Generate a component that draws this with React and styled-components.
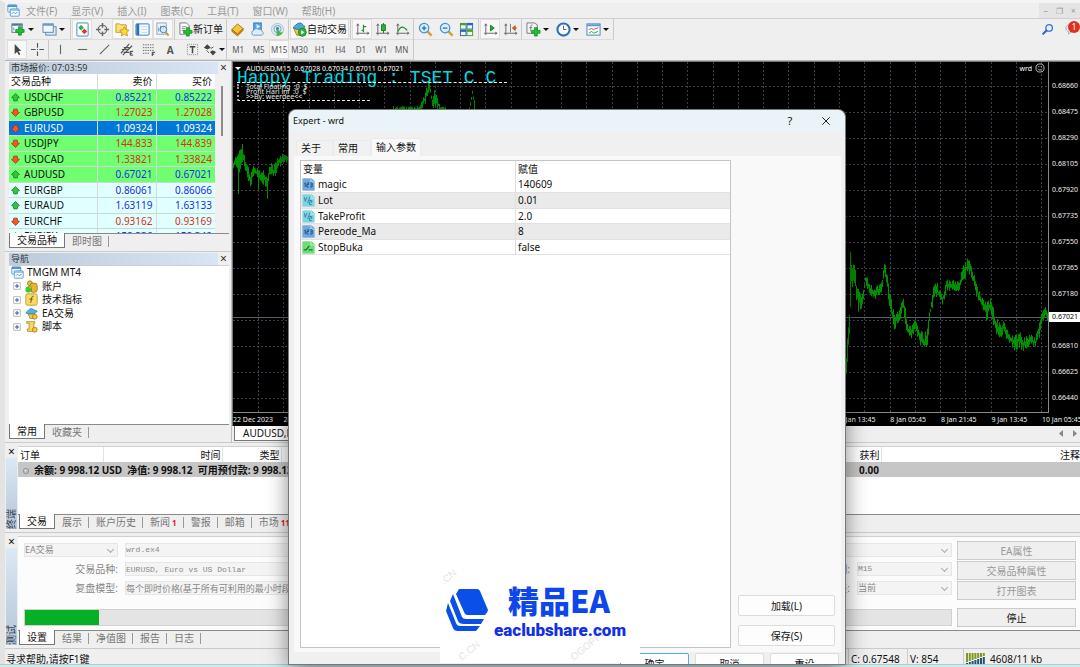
import React from "react";
import styled, { createGlobalStyle, css } from "styled-components";

const ui = `"Noto Sans", "Noto Sans CJK SC", sans-serif`;
const mono = `"Liberation Mono", "Noto Sans CJK SC", monospace`;

const GlobalStyle = createGlobalStyle`
  * { box-sizing: border-box; }
  body { margin: 0; background: #efefef; font: 10px/14px ${ui}; color: #111; }
  button, input, select { font: inherit; color: inherit; margin: 0; }
  table { border-collapse: collapse; table-layout: fixed; }
  td, th { padding: 0; font-weight: 400; overflow: hidden; white-space: nowrap; }
`;

/* ---------- frame ---------- */
const Screen = styled.div`
  position: relative;
  display: flex;
  flex-direction: column;
  min-height: 100vh;
  overflow: hidden;
  background: #efefef;
`;
const Frame = styled.div`
  flex: 1;
  display: flex;
  flex-direction: column;
  border-left: 5px solid #e3e3e3;
  border-top: 3px solid #f4f4f4;
`;
const DesktopEdge = styled.div`
  height: 3px;
  background: #cdeef0;
  border-top: 1px solid #b5cccd;
`;

/* ---------- menu and toolbars ---------- */
const MenuBar = styled.nav`
  display: flex;
  align-items: center;
  height: 16px;
  padding-left: 2px;
  border-bottom: 1px solid #cfcfcf;
  color: #999;
`;
const MenuItems = styled.div`
  display: flex;
  gap: 14px;
  flex: 1;
  padding-left: 6px;
`;
const MenuItem = styled.button`
  border: 0;
  padding: 0;
  background: none;
`;
const WindowControls = styled.div`
  display: flex;
  width: 41px;
  height: 15px;
  background: #e4e4e4;
`;
const WindowControl = styled.button`
  flex: 1;
  border: 0;
  padding: 0;
  background: none;
  color: #8a97a5;
  font-size: 8px;
  line-height: 14px;
`;
const ToolRow = styled.div`
  display: flex;
  height: ${(p) => p.$h}px;
  padding-left: 1px;
`;
const ToolGroup = styled.div`
  display: flex;
  width: ${(p) => p.$w}px;
  padding: 0 1px;
  border-right: 1px solid #c9c9c9;
  border-bottom: 1px solid #dcdcdc;
`;
const ToolButton = styled.button`
  flex: 1;
  min-width: 0;
  display: flex;
  align-items: center;
  justify-content: center;
  padding: 0;
  border: 0;
  background: ${(p) => (p.$on ? "#f8f8f8" : "none")};
  box-shadow: ${(p) => (p.$on ? "inset 0 0 0 1px #dedede" : "none")};
  color: ${(p) => p.$ink || "#111"};
  font-size: ${(p) => p.$size || 10}px;
  white-space: nowrap;
`;
const Caret = styled.span`
  margin-left: 2px;
  border: 3px solid transparent;
  border-top-color: #111;
  border-bottom: 0;
`;
const RightTools = styled.div`
  display: flex;
  align-items: center;
  gap: 10px;
  margin-left: auto;
`;
const Alert = styled.button`
  position: relative;
  width: 16px;
  height: 18px;
  padding: 0;
  border: 0;
  background: none;
`;
const Badge = styled.span`
  position: absolute;
  top: 0;
  right: 0;
  width: 12px;
  height: 12px;
  border-radius: 6px;
  background: #e03020;
  color: #fff;
  font-size: 9px;
  line-height: 12px;
`;

/* ---------- docked panels ---------- */
const Work = styled.main`
  flex: 1;
  display: flex;
  min-height: 383px;
  border-top: 1px solid #b5b5b5;
`;
const Side = styled.aside`
  display: flex;
  flex-direction: column;
  width: 227px;
  border-right: 1px solid #bdbdbd;
`;
const Panel = styled.section`
  display: flex;
  flex-direction: column;
  flex: ${(p) => (p.$grow ? "1" : "0 0 190px")};
  padding: 1px 2px 3px 4px;
  border-bottom: 1px solid #cacaca;
`;
const PanelHead = styled.header`
  display: flex;
  align-items: center;
  height: 12px;
  color: #333;
`;
const PanelTitle = styled.h2`
  flex: 1;
  margin: 0;
  padding-left: 2px;
  background: linear-gradient(90deg, #bccbda, #d7e5f4);
  font: 9px/12px ${ui};
`;
const CloseButton = styled.button`
  width: 11px;
  height: 12px;
  padding: 0;
  border: 0;
  background: none;
  font-size: 12px;
  line-height: 10px;
`;
const ListArea = styled.div`
  position: relative;
  flex: 1;
  min-height: 0;
  overflow: hidden;
  background: #fff;
  border-top: 1px solid #d0d0d0;
`;
const QuoteFrame = styled.div`
  display: flex;
  height: 159px;
  overflow: hidden;
  background: #fff;
`;
const QuoteTable = styled.table`
  flex: 1;
  th, td { height: 15px; line-height: 14px; border-bottom: 1px solid #c9d9d0; }
  tr:nth-child(even) td { height: 16px; }
  th, td + td { text-align: right; padding-right: 3px; }
  td + td, th + th { border-left: 1px solid #d5dcd8; }
  th:first-child { text-align: left; padding-left: 2px; }
  td:first-child { padding-left: 2px; }
  svg { vertical-align: -1px; margin-right: 4px; }
`;
const QuoteRow = styled.tr`
  background: ${(p) => p.$bg};
  color: ${(p) => (p.$sel ? "#fff" : "#111")};
  td + td { color: ${(p) => (p.$sel ? "#fff" : p.$ink)}; }
`;
const ScrollTrack = styled.div`
  width: 14px;
  padding: 12px 6px 0;
  background: #f0f0f0;
`;
const ScrollThumb = styled.div`
  height: 50px;
  background: #8a8a8a;
`;
const TabRow = styled.div`
  display: flex;
  height: 15px;
  border-top: 1px solid #8a8a8a;
  padding-left: ${(p) => p.$pad || 0}px;
`;
const Tab = styled.button`
  position: relative;
  padding: 0 7px;
  border: 0;
  background: none;
  color: #777;
  line-height: 13px;
  white-space: nowrap;
  &::after {
    content: "";
    position: absolute;
    right: 0;
    top: 2px;
    height: 11px;
    border-right: 1px solid #999;
  }
  ${(p) =>
    p.$on &&
    css`
      margin-top: -1px;
      background: #fff;
      color: #111;
      border: 1px solid #777;
      border-top: 0;
      &::after { display: none; }
    `}
`;
const Count = styled.b`
  color: #e0202c;
  font-size: 8px;
`;
const Tree = styled.ul`
  list-style: none;
  margin: 0;
  padding: 0 0 0 2px;
`;
const TreeItem = styled.li`
  display: flex;
  align-items: center;
  gap: ${(p) => (p.$root ? 3 : 4)}px;
  height: 13px;
  line-height: 13px;
  padding-left: ${(p) => (p.$root ? 0 : 2)}px;
  &:nth-child(even) { height: 14px; }
`;

/* ---------- chart ---------- */
const ChartColumn = styled.section`
  flex: 1;
  min-width: 0;
  display: flex;
  flex-direction: column;
`;
const ChartWindow = styled.div`
  position: relative;
  flex: 1;
  display: grid;
  grid-template: minmax(0, 1fr) 13px / minmax(0, 1fr) 31px;
  background: #000;
  border: solid #777;
  border-width: 1px 0 0 1px;
  color: #eee;
  font-size: 7px;
  line-height: 13px;
`;
const Plot = styled.div`
  position: relative;
  border: solid #8a8a8a;
  border-width: 0 1px 1px 0;
  svg { display: block; width: 100%; height: 350px; }
`;
const ChartCaption = styled.div`
  position: absolute;
  top: 0;
  left: 2px;
  right: 3px;
  height: 12px;
  display: flex;
  align-items: center;
  gap: 5px;
  color: #fff;
  ${Caret} { border-top-color: #fff; margin: 0; }
`;
const Expert = styled.span`
  display: flex;
  align-items: center;
  gap: 3px;
  margin-left: auto;
  && svg { width: 10px; height: 10px; }
`;
const Banner = styled.div`
  position: absolute;
  top: 7px;
  left: 4px;
  color: #00d8e0;
  font: 18px/18px ${mono};
  white-space: pre;
`;
const Comment = styled.div`
  position: absolute;
  top: 20px;
  left: 4px;
  width: ${(p) => p.$w}px;
  border-top: 1px dashed #eee;
`;
const CommentText = styled.div`
  position: absolute;
  top: 22px;
  left: 4px;
  padding-left: 7px;
  color: #eee;
  font: 7px/5px ${ui};
  white-space: pre;
  border-left: 2px dotted #999;
  border-bottom: 1px dashed #eee;
  width: 133px;
  height: 17px;
`;
const PriceAxis = styled.div`
  position: relative;
  padding-top: 11px;
`;
const PriceTick = styled.div`
  height: 26px;
  padding-left: 3px;
  line-height: 26px;
`;
const LastPrice = styled.div`
  position: absolute;
  top: 250px;
  left: 0;
  right: 0;
  height: 10px;
  padding-left: 3px;
  background: #fff;
  color: #000;
  line-height: 10px;
`;
const TimeAxis = styled.div`
  grid-column: 1 / -1;
  display: grid;
  grid-template-columns: repeat(16, minmax(0, 1fr)) 38px;
  white-space: nowrap;
`;
const ChartTabs = styled.div`
  display: flex;
  align-items: flex-start;
  height: 17px;
  padding-left: 2px;
  border-bottom: 1px solid #cacaca;
`;
const ChartTab = styled(Tab)`
  height: 15px;
  padding: 0 8px;
  margin: 0;
`;
const Scrollers = styled.div`
  margin-left: auto;
  display: flex;
  gap: 9px;
  padding: 4px 2px 0 0;
`;

/* ---------- terminal and tester ---------- */
const Dock = styled.section`
  display: flex;
  height: ${(p) => p.$h}px;
  padding: 3px 0 3px 1px;
  border-bottom: 1px solid #cacaca;
`;
const Spine = styled.div`
  width: 12px;
  display: flex;
  flex-direction: column;
`;
const SpineLabel = styled.div`
  flex: 1;
  width: 11px;
  background: linear-gradient(#b5c6d8, #dbe8f5);
  color: #33414f;
  font-size: 10px;
  line-height: 11px;
  writing-mode: vertical-rl;
  text-orientation: sideways;
  transform: rotate(180deg);
`;
const DockBody = styled.div`
  flex: 1;
  min-width: 0;
  display: flex;
  flex-direction: column;
`;
const OrdersTable = styled.table`
  width: 100%;
  th { height: 15px; text-align: right; padding-right: 1px; border-right: 1px solid #e2e2e2; }
  th:first-child { text-align: left; padding-left: 2px; }
  th:last-child { padding: 0; border: 0; }
  td { height: 15px; background: #c6c6c6; font-weight: 700; text-align: right; padding-right: 2px; }
  td:first-child { text-align: left; padding-left: 4px; white-space: pre; }
  svg { margin-right: 4px; vertical-align: -1px; }
`;
const TesterForm = styled.form`
  flex: 1;
  display: grid;
  grid-template-columns: minmax(0, 1fr) 119px;
  gap: 5px;
  padding: 4px 4px 0 6px;
  background: #fcfcfc;
  border-top: 1px solid #d0d0d0;
  color: #888;
`;
const Fields = styled.div`
  display: grid;
  grid-template-columns: 94px minmax(0, 1fr) 60px 95px;
  grid-template-rows: 14px 14px 14px 17px;
  row-gap: 5px;
  column-gap: 7px;
  align-content: start;
  padding-top: 2px;
`;
const FieldLabel = styled.label`
  text-align: right;
`;
const fieldBox = css`
  display: block;
  width: 100%;
  height: 14px;
  padding: 0;
  border: 1px solid #e6e6e6;
  background: #f4f4f4;
  color: #888;
  font-family: ${(p) => (p.$latin ? mono : ui)};
  font-size: ${(p) => (p.$latin ? 8 : 9)}px;
  line-height: 12px;
  opacity: 1;
`;
const TextField = styled.input`
  ${fieldBox}
`;
const SelectWrap = styled.div`
  position: relative;
  grid-column: ${(p) => (p.$wide ? "2 / -1" : "auto")};
  &::after {
    content: "";
    position: absolute;
    right: 5px;
    top: 4px;
    width: 4px;
    height: 4px;
    border: solid #aaa;
    border-width: 0 1px 1px 0;
    transform: rotate(45deg);
  }
`;
const Select = styled.select`
  ${fieldBox}
  appearance: none;
`;
const Progress = styled.div`
  grid-column: 1 / -1;
  margin-top: 9px;
  height: 17px;
  border: 1px solid #d2d2d2;
  background: #e4e4e4;
`;
const ProgressFill = styled.div`
  width: 8%;
  height: 15px;
  background: #06b025;
`;
const TesterButtons = styled.div`
  display: flex;
  flex-direction: column;
  gap: 1px;
`;
const TesterButton = styled.button`
  height: 19px;
  padding: 0;
  border: 1px solid #cbcbcb;
  background: #efefef;
  font-size: 10px;
  color: ${(p) => (p.disabled ? "#999" : "#111")};
  margin-top: ${(p) => (p.$apart ? 7 : 0)}px;
`;
const StatusBar = styled.footer`
  display: flex;
  height: 15px;
  overflow: hidden;
  line-height: 20px;
  padding-left: 1px;
`;
const StatusCell = styled.span`
  width: ${(p) => (p.$w ? `${p.$w}px` : "auto")};
  height: 20px;
  flex: ${(p) => (p.$w ? "none" : "1")};
  display: flex;
  align-items: center;
  gap: 5px;
  padding-left: ${(p) => (p.$w ? 2 : 0)}px;
  border-left: ${(p) => (p.$w ? "1px solid #ccc" : "0")};
  white-space: nowrap;
`;

/* ---------- dialog ---------- */
const Dialog = styled.div`
  position: absolute;
  top: 110px;
  left: 289px;
  right: 235px;
  bottom: 3px;
  display: flex;
  flex-direction: column;
  overflow: hidden;
  border-radius: 7px 7px 0 0;
  background: #f0f0f0;
`;
const DialogShadow = styled.div`
  position: absolute;
  top: 110px;
  left: 289px;
  right: 235px;
  bottom: 3px;
  border-radius: 7px 7px 0 0;
  box-shadow: 0 0 0 1px #777, 0 6px 22px rgba(0, 0, 0, 0.5);
`;
const DialogTitle = styled.header`
  display: flex;
  align-items: center;
  height: 22px;
  padding: 0 5px 0 4px;
  background: #eaf4f8;
  font-size: 9px;
  h1 { flex: 1; margin: 0; font: inherit; }
`;
const TitleButton = styled.button`
  width: 28px;
  margin-left: 8px;
  padding: 0;
  border: 0;
  background: none;
  font-size: 11px;
  line-height: 20px;
  svg { vertical-align: -1px; }
`;
const DialogTabs = styled.div`
  display: flex;
  align-items: flex-end;
  height: 24px;
  padding: 0 7px;
`;
const DialogTab = styled.button`
  height: ${(p) => (p.$on ? 18 : 16)}px;
  width: ${(p) => p.$w}px;
  padding: 0 4px 1px;
  border: 1px solid #ebebeb;
  border-bottom: 0;
  background: ${(p) => (p.$on ? "#f9f9f9" : "#f1f1f1")};
  text-align: left;
  white-space: nowrap;
`;
const DialogPage = styled.div`
  flex: 1;
  display: flex;
  gap: 7px;
  margin: 0 4px 0 5px;
  padding: 4px 6px;
  background: #f9f9f9;
`;
const ParamBox = styled.div`
  flex: 1;
  background: #fff;
  border: 1px solid #c4c4c4;
`;
const ParamTable = styled.table`
  width: 100%;
  th, td { height: 15px; text-align: left; padding-left: 2px; line-height: 14px; }
  td + td, th + th { border-left: 1px solid #dedede; }
  td { border-bottom: 1px solid #e2e2e2; }
  td:first-child { padding-left: 1px; }
  th { height: 16px; }
  tbody tr:nth-child(even) td { height: 16px; background: #eaeaea; }
  svg { vertical-align: -3px; margin-right: 3px; }
`;
const SideActions = styled.div`
  display: flex;
  flex-direction: column;
  justify-content: flex-end;
  gap: 9px;
  width: 97px;
  padding-bottom: 2px;
`;
const PushButton = styled.button`
  height: 21px;
  width: ${(p) => p.$w || 97}px;
  flex: none;
  padding: 0;
  border: 1px solid ${(p) => (p.$primary ? "#5aa9e0" : "#dcdcdc")};
  border-radius: 2px;
  background: #fdfdfd;
  font-size: 10px;
`;
const DialogFooter = styled.footer`
  display: flex;
  justify-content: flex-end;
  gap: 6px;
  height: 12px;
  overflow: hidden;
  padding: 1px 6px 0;
`;
const SiteMark = styled.div`
  position: absolute;
  left: 151px;
  bottom: 1px;
  width: 200px;
  height: 102px;
  background: #fff;
  svg { display: block; }
`;

/* ---------- icons ---------- */
const Svg = ({ s = 16, children }) => (
  <svg width={s} height={s} viewBox="0 0 16 16" fill="none" aria-hidden="true">{children}</svg>
);
const plus = (x, y) => (
  <path d={`M${x + 3} ${y}h3v3h3v3h-3v3h-3v-3h-3v-3h3z`} fill="#19c52b" stroke="#07801a" strokeWidth=".7" />
);
const gridMark = "M3 14V2M1 12h14M3 2L1.8 4M3 2l1.2 2M15 12l-2-1.2M15 12l-2 1.2";
const icons = {
  windows: <><rect x="1" y="1" width="11" height="9" rx="1" fill="#e9f5ff" stroke="#4b90cf" /><path d="M1 2.5h11" stroke="#3b82c5" strokeWidth="2" /><rect x="4" y="6" width="11" height="9" rx="1" fill="#f3faff" stroke="#4b90cf" /><path d="M4 7.5h11M6 12l2-2 2 2 3-2" stroke="#4b90cf" /></>,
  newChart: <><rect x="1" y="2" width="11" height="9" fill="#f4f9ff" stroke="#54779b" /><path d="M1 3h11" stroke="#54779b" strokeWidth="2" /><path d="M3 9V6" stroke="#789" />{plus(5, 5)}</>,
  profiles: <><rect x="4" y="5" width="11" height="9" fill="#dceaf8" stroke="#5b86ac" /><rect x="1" y="2" width="11" height="9" fill="#eef6ff" stroke="#5b86ac" /><path d="M1 3h11" stroke="#6b9bc8" strokeWidth="2" /></>,
  market: <><rect x="2" y="1" width="12" height="14" rx="1" fill="#fff" stroke="#3b86c9" /><path d="M6.500 3l3 3-3 3-3-3z" fill="#2bb23d" /><path d="M10 7l3 3-3 3-3-3z" fill="#e23a22" /></>,
  target: <><circle cx="8" cy="8" r="4.5" stroke="#666" strokeWidth="1.2" /><path d="M8 1v5M8 10v5M1 8h5M10 8h5" stroke="#666" strokeWidth="1.6" /></>,
  navigator: <><path d="M1 2h4l1 1h6v8H1z" fill="#ffe07a" stroke="#c29a20" /><path d="M10 5l1.6 3.2 3.4.5-2.4 2.5.6 3.6-3.2-1.7-3.2 1.7.6-3.6L5 8.700l3.400-.5z" fill="#ffd83a" stroke="#b88a12" strokeWidth=".8" /></>,
  terminal: <><rect x="1" y="2" width="14" height="12" rx="1" fill="#f3faff" stroke="#2e7bc4" /><path d="M3 2v12" stroke="#2e6fb5" strokeWidth="3" /><path d="M7 5h6M7 8h6M7 11h6" stroke="#c3d6e8" /></>,
  tester: <><rect x="2" y="1" width="10" height="12" fill="#eef4fa" stroke="#8aa5be" /><path d="M4 10V6M6 9V4M9 8V4" stroke="#4a86bd" /><circle cx="9" cy="8" r="3.500" fill="#cfe8f9" fillOpacity=".8" stroke="#4a7da8" /><path d="M11.500 11l3 3.500" stroke="#c59a35" strokeWidth="2" /></>,
  order: <><path d="M2 1h7l3 3v9H2z" fill="#fff" stroke="#777" /><path d="M4 5h5M4 7h4M4 9h3" stroke="#888" />{plus(6, 6)}</>,
  book: <><path d="M2 8l6-6 6 5-6 6z" fill="#f6c43b" stroke="#a8740d" /><path d="M2 8v2l6 5 6-6V7L8 13z" fill="#d18d1b" stroke="#99660b" strokeWidth=".7" /></>,
  cloud: <><rect x="4" y="1" width="8" height="8" fill="#58a9e8" stroke="#2d76b8" /><path d="M7 2v5l4-2z" fill="#d9f0ff" /><path d="M3.500 14a2.600 2.600 0 01.5-5 3 3 0 015-1 3 3 0 014 2.200 2 2 0 01-.5 3.800z" fill="#e0eefb" stroke="#6594c6" /></>,
  signal: <><circle cx="8" cy="8" r="6.500" fill="#dce9ee" stroke="#a9c6ce" /><circle cx="8" cy="7.500" r="3.800" stroke="#6fa6c2" /><path d="M7 8v7c3 0 6-2 7-5-2 2-4 1-4-1z" fill="#49b34e" /><circle cx="8" cy="7" r="1.600" fill="#3d7d9e" /></>,
  expert: <><path d="M2 7h12l-2 7H5z" fill="#f4c647" stroke="#a8801d" /><path d="M1 6c3-2 3-4 7-5 3 0 4 3 6 4-3 3-9 4-13 1z" fill="#4ba8dc" stroke="#2473a5" /><circle cx="11" cy="11" r="4.200" fill="#2fb739" stroke="#138520" /><path d="M9.800 8.800v4.400l3.500-2.200z" fill="#fff" /></>,
  bars: <><path d={gridMark} stroke="#666" /><path d="M9 3v8M9 5h3M7 9h2" stroke="#278a2b" strokeWidth="1.300" /></>,
  candles: <><path d={gridMark} stroke="#666" /><path d="M9 1v11" stroke="#167c1c" /><rect x="7" y="3" width="4" height="6" fill="#26b832" stroke="#167c1c" /></>,
  line: <><path d={gridMark} stroke="#666" /><path d="M3 10c3-6 6-6 10-1" stroke="#28902d" strokeWidth="1.300" /></>,
  zoomIn: <><path d="M10 10l4.500 4.500" stroke="#d2a02b" strokeWidth="2.600" /><circle cx="6.500" cy="6.500" r="5" fill="#d8efff" stroke="#468fc9" strokeWidth="1.300" /><path d="M4 6.500h5M6.500 4v5" stroke="#236fab" strokeWidth="1.300" /></>,
  zoomOut: <><path d="M10 10l4.500 4.500" stroke="#d2a02b" strokeWidth="2.600" /><circle cx="6.500" cy="6.500" r="5" fill="#d8efff" stroke="#468fc9" strokeWidth="1.300" /><path d="M4 6.500h5" stroke="#236fab" strokeWidth="1.300" /></>,
  tile: <>{[[1, 1, "#4a9e28"], [8, 1, "#2d62bd"], [1, 8, "#2d62bd"], [8, 8, "#4a9e28"]].map(([x, y, c]) => <g key={`${x}${y}`}><rect x={x} y={y} width="7" height="7" fill={c} /><rect x={x + 1} y={y + 2.500} width="5" height="3.500" fill="#eef6ff" /></g>)}</>,
  autoScroll: <><path d={gridMark} stroke="#666" /><path d="M8 3.500v6l4-3z" fill="#2bad36" stroke="#15801e" /></>,
  shift: <><path d={gridMark} stroke="#666" /><path d="M8 2v9" stroke="#777" /><path d="M15 6.500h-3M13 4l-3 2.500 3 2.500z" stroke="#c85521" fill="#d85a22" /></>,
  indicators: <><path d="M1 1h8l3 2v9H1z" fill="#f3f5f7" stroke="#777" /><path d="M7 3c-2 0-2 1-2 7M3.500 6h3" stroke="#777" />{plus(6, 6)}</>,
  clock: <><circle cx="8" cy="8" r="6.500" fill="#fff" stroke="#2672ba" strokeWidth="2.200" /><path d="M8 4v4h3" stroke="#555" /></>,
  template: <><rect x="1" y="2" width="14" height="12" fill="#f8fcff" stroke="#4681b5" /><path d="M1 3.500h14" stroke="#5b9bd2" strokeWidth="2" /><path d="M3 8l3-1 2 1 5-2" stroke="#c05a3a" /><path d="M3 12l3-2 2 2 5-2" stroke="#3a9a44" /></>,
  cursor: <path d="M5 2v11l2.500-2.500L9.500 14l1.500-1-2-3.300H12z" fill="#444" />,
  cross: <path d="M8 1v5M8 10v5M1 8h5M10 8h5M7.500 8h1" stroke="#555" strokeWidth="1.200" />,
  vline: <path d="M8 3v10" stroke="#666" strokeWidth="1.200" />,
  hline: <path d="M3 8h10" stroke="#666" strokeWidth="1.200" />,
  trend: <path d="M3 13L13 3" stroke="#666" strokeWidth="1.200" />,
  channel: <><path d="M2 12l9-10M4 14L14 4M3 8h6M5 6h6M5 11h6" stroke="#555" strokeWidth="1.200" /><path d="M15 10h-3v4h3M12 12h2" stroke="#333" /></>,
  fibo: <><path d="M2 3h12M2 6h12M2 9h12M2 12h7" stroke="#666" strokeDasharray="1.500 1" /><path d="M15 11h-3v4M12 13h2" stroke="#333" /></>,
  label: <><rect x="2.500" y="2.500" width="11" height="11" stroke="#888" strokeDasharray="1 1" /><path d="M5 5h6M8 5v7" stroke="#444" strokeWidth="1.600" /></>,
  arrows: <><path d="M1 6l4-4 4 4-4 2zM8 11l3-2 4 2-3.500 4z" fill="#444" /><path d="M4 9l3 3M9 7l3-2" stroke="#444" /></>,
  search: <><circle cx="10" cy="6" r="4" fill="#eaf3ff" stroke="#3a6fd8" strokeWidth="1.600" /><path d="M7 9l-5 5" stroke="#2f5fc8" strokeWidth="2.400" /></>,
  chat: <path d="M1 8c0-3 3-4 7-4s6 2 6 4-3 4-6 4l-4 3v-3c-2-1-3-2-3-4z" fill="#e8e8ee" stroke="#aaa" />,
  up: <path d="M8 1l7 7-3 1-1 5H5L4 9 1 8z" fill="#35c341" stroke="#168022" strokeWidth="1.400" />,
  down: <path d="M8 15L1 8l3-1 1-5h6l1 5 3 1z" fill="#f2572c" stroke="#b22c10" strokeWidth="1.400" />,
  account: <><circle cx="6" cy="4" r="3" fill="#f0c13a" stroke="#9a7611" /><rect x="6" y="4" width="9" height="11" rx="3" fill="#e7b82c" stroke="#9a7611" /><path d="M2 14V9l4-2 2 2v5z" fill="#f5d058" stroke="#9a7611" /><circle cx="4" cy="12" r="3.500" fill="#2fd130" /></>,
  func: <><rect x="1" y="1" width="14" height="14" rx="2" fill="#f8da68" stroke="#ba9220" /><path d="M10.500 4C8 3.500 8.500 6 7 12M5.500 7.500h4" stroke="#5b4b16" strokeWidth="1.200" /></>,
  hat: <><path d="M4 8h8l-1 6H6z" fill="#f3ce57" stroke="#a8801d" /><path d="M1 7c3-2 3-4 6-5 3 0 4 2 8 3-2 4-10 5-14 2z" fill="#57b0df" stroke="#2878a8" /><circle cx="12" cy="12" r="3" fill="#f2c53a" stroke="#a07b18" /></>,
  script: <><path d="M2 2h10v2h-1v7h2v3H3v-3h2V4H2z" fill="#f7d765" stroke="#b08a1c" /><circle cx="12" cy="12" r="3" fill="#f2c53a" stroke="#a07b18" /></>,
  expand: <><rect x="1.500" y="1.500" width="13" height="13" fill="#fff" stroke="#aaa" strokeWidth="1.600" /><path d="M4 8h8M8 4v8" stroke="#3f57a5" strokeWidth="2" /></>,
  smile: <><circle cx="8" cy="8" r="6.500" stroke="#ddd" strokeWidth="1.300" /><path d="M5 6h2M9 6h2M4.500 9c2 3 5 3 7 0" stroke="#ddd" strokeWidth="1.300" /></>,
  ball: <><circle cx="8" cy="8" r="5.500" fill="#bbb" stroke="#888" strokeWidth="1.500" /><circle cx="7" cy="7" r="2" fill="#e5e5e5" /></>,
  close: <path d="M2 2l12 12M14 2L2 14" stroke="#222" strokeWidth="1.600" />,
};
const Icon = ({ n, s }) => <Svg s={s}>{icons[n]}</Svg>;

const TrafficIcon = () => (
  <svg width="19" height="12" viewBox="0 0 19 12" fill="none" aria-hidden="true">
    {[0, 1, 2, 3, 4, 5, 6].map((i) => (
      <g key={i} strokeWidth="2">
        <path d={`M${1 + i * 2.8} 0V${9 - i}`} stroke="#7d9a1e" />
        <path d={`M${1 + i * 2.8} ${10 - i}V12`} stroke="#1d5578" />
      </g>
    ))}
  </svg>
);

const paramArt = {
  int: ["#6ea8dc", <path key="p" d="M3 7l1-1v5M6 6h2v2H6v3h2M10 6h2.500v5H10M10.500 8.500h2" stroke="#123f75" />],
  double: ["#7fd4e2", <path key="p" d="M3 4l1 5 2-5M10 3l-3 8M9 8h3v2H9v3h3" stroke="#23798f" />],
  bool: ["#6fdb7a", <path key="p" d="M2 11h3l4-5M8 11h5" stroke="#137a22" strokeWidth="1.600" />],
};
const ParamIcon = ({ kind }) => (
  <svg width="13" height="13" viewBox="0 0 16 16" fill="none" aria-hidden="true">
    <path d="M1 1h11l3 3v11H1z" fill={paramArt[kind][0]} stroke={paramArt[kind][0]} />
    <path d="M11 1v4h4" stroke="#fff" strokeOpacity=".7" />
    {paramArt[kind][1]}
  </svg>
);

/* ---------- data ---------- */
const BLUE = "#1a2fe0";
const RED = "#d8301c";
const quotes = [
  ["USDCHF", "0.85221", "0.85222", "up", "g"],
  ["GBPUSD", "1.27023", "1.27028", "down", "g"],
  ["EURUSD", "1.09324", "1.09324", "down", "s"],
  ["USDJPY", "144.833", "144.839", "down", "g"],
  ["USDCAD", "1.33821", "1.33824", "down", "g"],
  ["AUDUSD", "0.67021", "0.67021", "up", "g"],
  ["EURGBP", "0.86061", "0.86066", "up", "c"],
  ["EURAUD", "1.63119", "1.63133", "up", "c"],
  ["EURCHF", "0.93162", "0.93169", "down", "c"],
  ["EURJPY", "158.336", "158.342", "up", "c"],
];
const rowBg = { g: "#70ff70", s: "#0078d7", c: "#e0ffff" };

const params = [
  ["int", "magic", "140609"],
  ["double", "Lot", "0.01"],
  ["double", "TakeProfit", "2.0"],
  ["int", "Pereode_Ma", "8"],
  ["bool", "StopBuka", "false"],
];

const prices = ["0.68660", "0.68475", "0.68290", "0.68105", "0.67920", "0.67735", "0.67550", "0.67365", "0.67180", "0.66995", "0.66810", "0.66625", "0.66440"];
const times = ["22 Dec 2023", "26 Dec 05:45", "26 Dec 21:45", "27 Dec 13:45", "28 Dec 05:45", "28 Dec 21:45", "29 Dec 13:45", "2 Jan 05:45", "2 Jan 21:45", "3 Jan 13:45", "4 Jan 05:45", "4 Jan 21:45", "5 Jan 13:45", "8 Jan 05:45", "8 Jan 21:45", "9 Jan 13:45", "10 Jan 05:45"];

// Turning points of the price series, in plot units: x, centre, half range.
const runs = [
  [[0, 102, 6], [5, 100, 14], [9, 88, 6], [12, 104, 8], [17, 120, 8], [21, 108, 5], [26, 114, 8], [31, 116, 6], [34, 122, 12], [36, 106, 8], [41, 110, 8], [45, 101, 5], [50, 96, 4], [56, 96, 3]],
  [[160, 48, 3], [168, 48, 3], [186, 48, 4], [191, 38, 6], [196, 24, 6], [199, 40, 10], [203, 38, 6], [207, 48, 3], [213, 48, 4]],
  [[236, 48, 2], [239, 30, 6], [242, 48, 2]],
  [[611, 326, 20], [613, 300, 14], [616, 258, 14], [618, 206, 16], [621, 214, 12], [625, 238, 12], [628, 240, 8], [632, 218, 6], [637, 228, 5], [642, 231, 6], [648, 226, 5], [651, 206, 8], [654, 222, 8], [657, 242, 9], [661, 260, 7], [666, 254, 8], [670, 238, 9], [673, 264, 8], [677, 272, 8], [681, 262, 6], [686, 274, 8], [691, 280, 8], [694, 274, 12], [697, 248, 10], [701, 226, 8], [706, 232, 9], [709, 238, 6], [713, 223, 5], [719, 224, 6], [725, 224, 6], [730, 212, 8], [734, 204, 8], [738, 208, 8], [743, 228, 6], [748, 238, 7], [753, 250, 9], [757, 242, 10], [762, 262, 8], [767, 270, 7], [771, 264, 6], [775, 276, 7], [780, 280, 8], [786, 278, 8], [791, 282, 7], [796, 278, 5], [802, 280, 5], [806, 268, 7], [809, 256, 6], [812, 250, 6], [815, 254, 3]],
];
const noise = (n) => {
  const v = Math.sin(n * 127.1) * 43758.5453;
  return v - Math.floor(v);
};
const barPath = runs
  .map((run) => {
    let d = "";
    for (let i = 1; i < run.length; i++) {
      const [x0, y0, r0] = run[i - 1];
      const [x1, y1] = run[i];
      for (let x = x0; x < x1; x++) {
        const y = y0 + ((y1 - y0) * (x - x0)) / (x1 - x0);
        const hi = y - 1 - r0 * noise(x);
        const lo = y + 1 + r0 * noise(x + 500);
        d += `M${x + 0.5} ${hi.toFixed(1)}V${lo.toFixed(1)}`;
      }
    }
    return d;
  })
  .join("");

/* ---------- sections ---------- */
const Tool = ({ n, on, label }) => (
  <ToolButton $on={on} aria-label={label || n}><Icon n={n} s={15} /></ToolButton>
);
const MenuTool = ({ n }) => (
  <ToolButton aria-label={n} aria-haspopup="menu"><Icon n={n} s={15} /><Caret /></ToolButton>
);

const Toolbars = () => (
  <>
    <MenuBar>
      <Icon n="windows" s={13} />
      <MenuItems>
        {["文件(F)", "显示(V)", "插入(I)", "图表(C)", "工具(T)", "窗口(W)", "帮助(H)"].map((m) => <MenuItem key={m}>{m}</MenuItem>)}
      </MenuItems>
      <WindowControls>
        <WindowControl aria-label="minimize">–</WindowControl>
        <WindowControl aria-label="restore">❐</WindowControl>
        <WindowControl aria-label="close">×</WindowControl>
      </WindowControls>
    </MenuBar>
    <ToolRow $h={21}>
      <ToolGroup $w={65}><MenuTool n="newChart" /><MenuTool n="profiles" /></ToolGroup>
      <ToolGroup $w={104}>
        <Tool n="market" on /><Tool n="target" /><Tool n="navigator" on /><Tool n="terminal" on /><Tool n="tester" on />
      </ToolGroup>
      <ToolGroup $w={52}><ToolButton><Icon n="order" s={15} />新订单</ToolButton></ToolGroup>
      <ToolGroup $w={62}><Tool n="book" /><Tool n="cloud" /><Tool n="signal" /></ToolGroup>
      <ToolGroup $w={62}><ToolButton $on><Icon n="expert" s={15} />自动交易</ToolButton></ToolGroup>
      <ToolGroup $w={63}><Tool n="bars" on /><Tool n="candles" /><Tool n="line" /></ToolGroup>
      <ToolGroup $w={65}><Tool n="zoomIn" /><Tool n="zoomOut" /><Tool n="tile" /></ToolGroup>
      <ToolGroup $w={43}><Tool n="autoScroll" on /><Tool n="shift" /></ToolGroup>
      <ToolGroup $w={92}><MenuTool n="indicators" /><MenuTool n="clock" /><MenuTool n="template" /></ToolGroup>
      <RightTools>
        <Icon n="search" s={13} />
        <Alert aria-label="messages"><Icon n="chat" s={14} /><Badge>1</Badge></Alert>
      </RightTools>
    </ToolRow>
    <ToolRow $h={20}>
      <ToolGroup $w={43}><Tool n="cursor" on /><Tool n="cross" /></ToolGroup>
      <ToolGroup $w={178}>
        <Tool n="vline" /><Tool n="hline" /><Tool n="trend" /><Tool n="channel" /><Tool n="fibo" />
        <ToolButton $ink="#555"><b>A</b></ToolButton>
        <Tool n="label" /><MenuTool n="arrows" />
      </ToolGroup>
      <ToolGroup $w={187}>
        {["M1", "M5", "M15", "M30", "H1", "H4", "D1", "W1", "MN"].map((t) => (
          <ToolButton key={t} $on={t === "M15"} $ink="#555" $size={8}>{t}</ToolButton>
        ))}
      </ToolGroup>
    </ToolRow>
  </>
);

const MarketWatch = () => (
  <Panel>
    <PanelHead><PanelTitle>市场报价: 07:03:59</PanelTitle><CloseButton aria-label="close">×</CloseButton></PanelHead>
    <QuoteFrame>
      <QuoteTable>
        <colgroup><col width="88" /><col width="59" /><col width="59" /></colgroup>
        <thead><tr><th>交易品种</th><th>卖价</th><th>买价</th></tr></thead>
        <tbody>
          {quotes.map(([sym, bid, ask, dir, kind]) => (
            <QuoteRow key={sym} $bg={rowBg[kind]} $sel={kind === "s"} $ink={dir === "up" ? BLUE : RED}>
              <td><Icon n={dir} s={9} />{sym}</td><td>{bid}</td><td>{ask}</td>
            </QuoteRow>
          ))}
        </tbody>
      </QuoteTable>
      <ScrollTrack><ScrollThumb /></ScrollTrack>
    </QuoteFrame>
    <TabRow><Tab $on>交易品种</Tab><Tab>即时图</Tab></TabRow>
  </Panel>
);

const Navigator = () => (
  <Panel $grow>
    <PanelHead><PanelTitle>导航</PanelTitle><CloseButton aria-label="close">×</CloseButton></PanelHead>
    <ListArea>
      <Tree>
        <TreeItem $root><Icon n="windows" s={13} />TMGM MT4</TreeItem>
        {[["account", "账户"], ["func", "技术指标"], ["hat", "EA交易"], ["script", "脚本"]].map(([n, t]) => (
          <TreeItem key={n}><Icon n="expand" s={8} /><Icon n={n} s={13} />{t}</TreeItem>
        ))}
      </Tree>
    </ListArea>
    <TabRow><Tab $on>常用</Tab><Tab>收藏夹</Tab></TabRow>
  </Panel>
);

const Chart = () => (
  <ChartColumn>
    <ChartWindow>
      <Plot>
        <svg viewBox="0 0 815 350" preserveAspectRatio="none" aria-hidden="true">
          <g stroke="#38424c" strokeDasharray="2 2">
            {Array.from({ length: 32 }, (_, i) => { const x = Math.round(25 + i * 25.26) + 0.5; return <path key={i} d={`M${x} 0V350`} />; })}
            {prices.map((p, i) => <path key={p} d={`M0 ${24.5 + i * 26}H815`} />)}
          </g>
          <path d="M0 255.500H815" stroke="#56616b" />
          <path d={barPath} stroke="#009000" />
          <path d="M5.500 100V132M34.500 116V137M25.500 110V128M9.500 82V100M617.500 190V240" stroke="#009000" />
        </svg>
        <ChartCaption>
          <Caret />
          <span>AUDUSD,M15&nbsp; 0.67028 0.67034 0.67011 0.67021</span>
          <Expert>wrd <Icon n="smile" s={10} /></Expert>
        </ChartCaption>
        <Banner>Happy Trading : TSET C C</Banner>
        <Comment $w={270} />
        <CommentText>{"Total Floating  :0  $\nProfit Hari ini  :0  $\n>>By: weerdee<<"}</CommentText>
      </Plot>
      <PriceAxis>
        {prices.map((p) => <PriceTick key={p}>{p}</PriceTick>)}
        <LastPrice>0.67021</LastPrice>
      </PriceAxis>
      <TimeAxis>{times.map((t) => <span key={t}>{t}</span>)}</TimeAxis>
    </ChartWindow>
    <ChartTabs>
      <ChartTab $on>AUDUSD,M15</ChartTab>
      <Scrollers>
        <svg width="5" height="7" viewBox="0 0 5 7"><path d="M4 0v7L0 3.500z" fill="#888" /></svg>
        <svg width="5" height="7" viewBox="0 0 5 7"><path d="M0 0v7l4-3.500z" fill="#888" /></svg>
      </Scrollers>
    </ChartTabs>
  </ChartColumn>
);

const Terminal = () => (
  <Dock $h={90}>
    <Spine><CloseButton aria-label="close">×</CloseButton><SpineLabel>终端</SpineLabel></Spine>
    <DockBody>
      <ListArea>
        <OrdersTable>
          <colgroup><col width="85" /><col width="119" /><col width="59" /><col /><col width="60" /><col width="199" /></colgroup>
          <thead><tr><th>订单</th><th>时间</th><th>类型</th><th /><th>获利</th><th>注释</th></tr></thead>
          <tbody>
            <tr><td colSpan={4}><Icon n="ball" s={8} />{"余额: 9 998.12 USD  净值: 9 998.12  可用预付款: 9 998.12"}</td><td>0.00</td><td /></tr>
          </tbody>
        </OrdersTable>
      </ListArea>
      <TabRow $pad={1}>
        <Tab $on>交易</Tab><Tab>展示</Tab><Tab>账户历史</Tab><Tab>新闻<Count> 1</Count></Tab><Tab>警报</Tab><Tab>邮箱</Tab><Tab>市场<Count> 11</Count></Tab>
      </TabRow>
    </DockBody>
  </Dock>
);

const Combo = ({ id, wide, latin, label, children }) => (
  <SelectWrap $wide={wide}>
    <Select id={id} aria-label={label} $latin={latin} disabled><option>{children}</option></Select>
  </SelectWrap>
);

const Tester = () => (
  <Dock $h={116}>
    <Spine><CloseButton aria-label="close">×</CloseButton><SpineLabel>测试</SpineLabel></Spine>
    <DockBody>
      <TesterForm onSubmit={(e) => e.preventDefault()}>
        <Fields>
          <Combo label="类型">EA交易</Combo>
          <Combo wide latin label="EA">wrd.ex4</Combo>
          <FieldLabel htmlFor="symbol">交易品种:</FieldLabel>
          <TextField id="symbol" $latin disabled defaultValue="EURUSD, Euro vs US Dollar" />
          <FieldLabel htmlFor="period">时间周期:</FieldLabel>
          <Combo id="period" latin>M15</Combo>
          <FieldLabel htmlFor="model">复盘模型:</FieldLabel>
          <TextField id="model" disabled defaultValue="每个即时价格(基于所有可利用的最小时段)" />
          <FieldLabel htmlFor="spread">点差:</FieldLabel>
          <Combo id="spread">当前</Combo>
          <Progress><ProgressFill /></Progress>
        </Fields>
        <TesterButtons>
          <TesterButton disabled>EA属性</TesterButton>
          <TesterButton disabled>交易品种属性</TesterButton>
          <TesterButton disabled>打开图表</TesterButton>
          <TesterButton $apart>停止</TesterButton>
        </TesterButtons>
      </TesterForm>
      <TabRow $pad={1}><Tab $on>设置</Tab><Tab>结果</Tab><Tab>净值图</Tab><Tab>报告</Tab><Tab>日志</Tab></TabRow>
    </DockBody>
  </Dock>
);

const Logo = () => (
  <svg width="200" height="102" viewBox="0 0 200 102" role="img" aria-label="精品EA">
    <g fill="#e4e4e4" fontFamily="Liberation Sans, sans-serif" fontSize="10">
      <text transform="translate(4 24) rotate(-40)">.CN</text>
      <text transform="translate(22 100) rotate(-40)">C.CN</text>
      <text transform="translate(134 100) rotate(-40)">OGOPPC</text>
    </g>
    <g fill="#0a4fe8">
      <path d="M19 28H37Q39 28 40 30L48 49Q48 51 45 54H27Q25 54 24 51L16 33z" />
      <path d="M13 33L22 56Q23 58 26 58H44L41 63H24Q19 63 18 60L10 40z" />
      <path d="M8 42L16 62Q17 65 20 65H40L36 70H18Q14 70 13 67L6 50z" />
    </g>
    <text x="68" y="52" fill="#0d46ea" fontFamily="Noto Sans CJK SC, sans-serif" fontWeight="900" fontSize="31">精品EA</text>
    <text x="54" y="75" fill="#1430e4" fontFamily="Roboto, sans-serif" fontWeight="900" fontSize="17">eaclubshare.com</text>
  </svg>
);

const ExpertDialog = () => (
  <>
    <DialogShadow />
    <Dialog role="dialog" aria-label="Expert - wrd">
      <DialogTitle>
        <h1>Expert - wrd</h1>
        <TitleButton aria-label="help">?</TitleButton>
        <TitleButton aria-label="close"><Icon n="close" s={10} /></TitleButton>
      </DialogTitle>
      <DialogTabs>
        <DialogTab $w={37}>关于</DialogTab><DialogTab $w={38}>常用</DialogTab><DialogTab $on $w={50}>输入参数</DialogTab>
      </DialogTabs>
      <DialogPage>
        <ParamBox>
          <ParamTable>
            <thead><tr><th>变量</th><th>赋值</th></tr></thead>
            <tbody>
              {params.map(([kind, name, value]) => (
                <tr key={name}><td><ParamIcon kind={kind} />{name}</td><td>{value}</td></tr>
              ))}
            </tbody>
          </ParamTable>
        </ParamBox>
        <SideActions><PushButton>加载(L)</PushButton><PushButton>保存(S)</PushButton></SideActions>
      </DialogPage>
      <DialogFooter>
        <PushButton $w={69} $primary>确定</PushButton><PushButton $w={69}>取消</PushButton><PushButton $w={69}>重设</PushButton>
      </DialogFooter>
      <SiteMark><Logo /></SiteMark>
    </Dialog>
  </>
);

export default function App() {
  return (
    <Screen>
      <GlobalStyle />
      <Frame>
        <Toolbars />
        <Work>
          <Side><MarketWatch /><Navigator /></Side>
          <Chart />
        </Work>
        <Terminal />
        <Tester />
        <StatusBar>
          <StatusCell>寻求帮助,请按F1键</StatusCell>
          <StatusCell $w={59}>C: 0.67548</StatusCell>
          <StatusCell $w={56}>V: 854</StatusCell>
          <StatusCell $w={117}><TrafficIcon />4608/11 kb</StatusCell>
        </StatusBar>
      </Frame>
      <DesktopEdge />
      <ExpertDialog />
    </Screen>
  );
}
